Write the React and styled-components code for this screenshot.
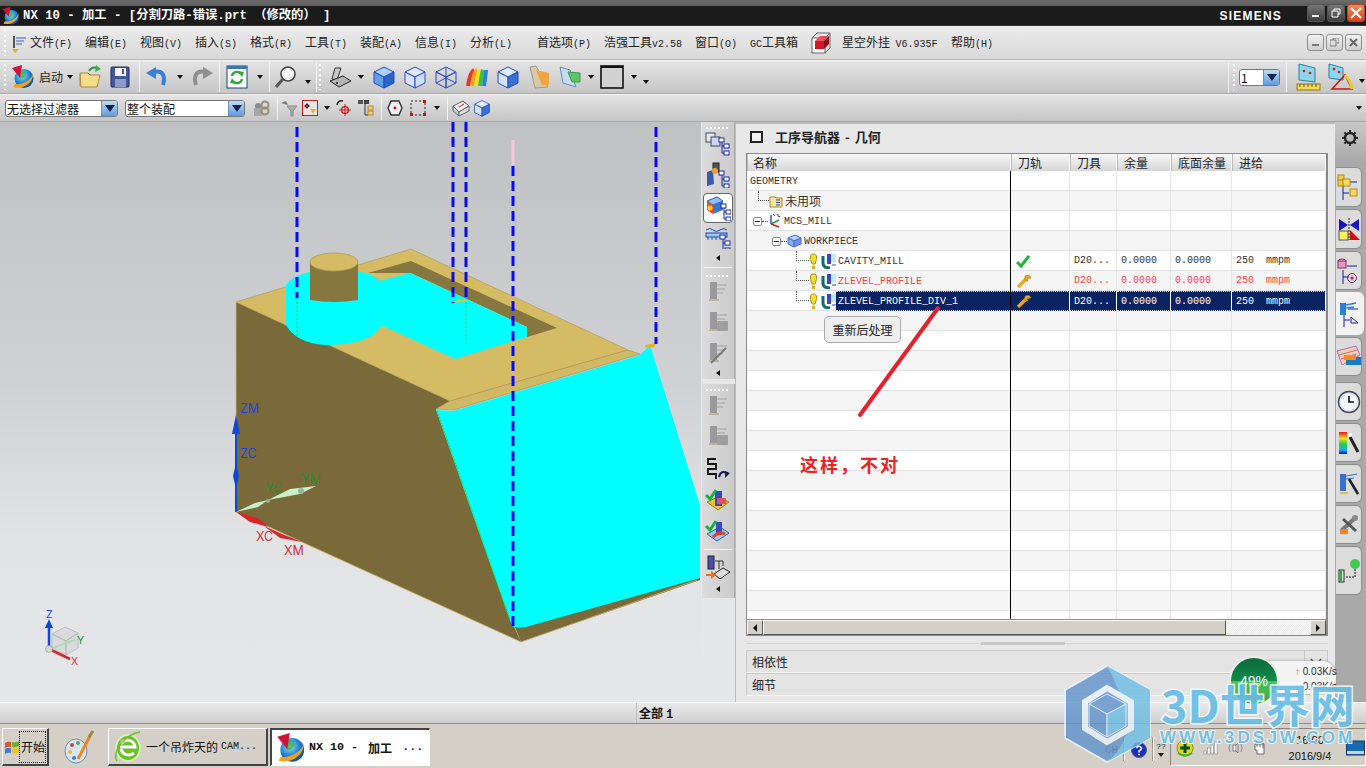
import React from "react";
import styled, { createGlobalStyle } from "styled-components";

const CJK = '"Noto Sans CJK SC", sans-serif';
const MONO = '"Liberation Mono", "Noto Sans CJK SC", monospace';

const Global = createGlobalStyle`
  html, body { margin: 0; padding: 0; background: #d4d0c8; overflow: hidden; }
  * { box-sizing: border-box; }
`;

const Screen = styled.div`
  position: relative; width: 1366px; height: 768px; overflow: hidden;
  display: flex; flex-direction: column; font: 12px/1 ${CJK}; color: #111;
`;

/* ---------- generic svg wrapper (drawings only) ---------- */
const SvgBox = styled.svg`flex: none; display: block;`;
const I = ({ w = 20, h = 20, children }) => (
  <SvgBox width={w} height={h} viewBox={`0 0 ${w} ${h}`}>{children}</SvgBox>
);

/* ---------- title bar ---------- */
const TitleBar = styled.div`
  flex: 0 0 26px; display: flex; align-items: center; padding: 6px 0 0 2px;
  background: linear-gradient(#6b6b6b 0, #5c5c5c 6px, #1b1b1b 6px, #1b1b1b 25px, #333 25px);
  color: #fff;
`;
const TitleText = styled.span`
  margin-left: 3px; font: bold 12.3px/1 ${MONO}; white-space: pre;
`;
const Brand = styled.span`
  margin-left: auto; margin-right: 25px; font: bold 12px/1 "Liberation Sans", sans-serif; letter-spacing: 1.2px;
`;
const WinBtns = styled.div`display: flex; gap: 2px; align-self: flex-start; margin-top: -2px; padding-right: 1px;`;
const WinBtn = styled.div`
  width: 18px; height: 18px; border-radius: 3px; display: flex; align-items: center; justify-content: center;
  background: ${p => p.$close ? "linear-gradient(#f08a5c,#d8431c)" : "linear-gradient(#777,#3f3f3f)"};
  border: 1px solid ${p => p.$close ? "#b5472a" : "#555"};
`;

/* ---------- menu bar ---------- */
const MenuBar = styled.div`
  flex: 0 0 34px; display: flex; align-items: center; padding-left: 3px;
  background: linear-gradient(#ececec, #d9d9d9); border-bottom: 1px solid #b5b5b5;
`;
const Grip = styled.div`
  flex: none; width: ${p => p.$w || 7}px; height: ${p => p.$h || 26}px;
  background: repeating-linear-gradient(#fff 0 2px, transparent 2px 5px) 1px 0 / 2px 100% no-repeat;
`;
const MenuItem = styled.div`
  flex: none; width: ${p => p.$w}px; margin-left: ${p => p.$ml || 0}px; font-size: 12px; white-space: pre; color: #222;
`;
const Key = styled.span`font: 10px/1 ${MONO};`;
const DocBtns = styled.div`margin-left: auto; display: flex; gap: 2px; padding-right: 4px; margin-top: -1px;`;
const DocBtn = styled.div`
  width: 17px; height: 17px; border: 1px solid #8f8f8f; border-radius: 3px; background: linear-gradient(#f2f2f2,#cfcfcf);
  display: flex; align-items: center; justify-content: center;
`;

/* ---------- tool bars ---------- */
const Toolbar = styled.div`
  flex: 0 0 ${p => p.$h}px; display: flex; align-items: center; padding-left: ${p => p.$pad}px;
  background: linear-gradient(#e4e4e4, #c6c6c6); border-top: 1px solid #f2f2f2; border-bottom: 1px solid #a6a6a6;
`;
const Tool = styled.div`
  flex: none; width: ${p => p.$w}px; display: flex; align-items: center; justify-content: center;
`;
const ToolLabel = styled.span`flex: none; width: 28px; padding-left: 4px; font-size: 12px; color: #222;`;
const Caret = styled.span`
  flex: none; display: block; width: 0; height: 0; margin-top: ${p => p.$down || 0}px;
  border-left: 3.5px solid transparent; border-right: 3.5px solid transparent; border-top: 4px solid #111;
`;
const Sep = styled.div`
  flex: none; width: ${p => p.$w || 3}px; height: ${p => p.$h || 30}px;
  background: linear-gradient(#f4f4f4,#f4f4f4) center / 1px 100% no-repeat;
`;
const Spacer = styled.div`flex: 1;`;
const RightGroup = styled.div`
  flex: none; width: 138px; height: 100%; display: flex; align-items: center; padding-left: 3px;
  border-left: 1px solid #ededed;
`;
const SelectBox = styled.div`
  flex: none; width: ${p => p.$w}px; height: 17px; display: flex; align-items: stretch;
  margin-right: ${p => p.$mr || 0}px; background: #fff; border: 1px solid #777; border-radius: 3px; overflow: hidden;
`;
const SelectText = styled.span`flex: 1; font-size: 12px; line-height: 15px; padding-left: 1px; color: #111; white-space: nowrap;`;
const SelectArrow = styled.span`
  flex: 0 0 16px; display: flex; align-items: center; justify-content: center;
  background: linear-gradient(#bfdcf6,#5d9be0); border-left: 1px solid #6d8fb8;
`;
const BigCaret = styled.span`
  display: block; width: 0; height: 0; border-left: 5.5px solid transparent; border-right: 5.5px solid transparent;
  border-top: 7px solid #10204a;
`;

/* ---------- main area ---------- */
const Main = styled.div`flex: 0 0 580px; display: flex; overflow: hidden;`;
const Viewport = styled.div`
  flex: 0 0 701px; height: 100%;
  background: linear-gradient(#bfc1c3 0, #d0d1d4 45%, #e2e3e5 72%, #e6e7e9 100%);
`;
const SideColumn = styled.div`
  flex: 0 0 34px; display: flex; flex-direction: column; gap: 5px; background: #e6e7e9;
`;
const SideGroup = styled.div`
  flex: 0 0 ${p => p.$h}px; display: flex; flex-direction: column; align-items: center;
  background: linear-gradient(90deg,#dcdcdc,#cbcbcb); border-right: 1px solid #a9a9a9; border-left: 1px solid #e8e8e8;
`;
const SideGrip = styled.div`
  flex: 0 0 6px; width: 24px; margin-top: 3px;
  background: repeating-linear-gradient(90deg,#fff 0 2px,transparent 2px 4px) center 2px / 100% 2px no-repeat;
`;
const SideBtn = styled.div`
  flex: 0 0 ${p => p.$h}px; width: 30px; display: flex; align-items: center; justify-content: center;
  ${p => p.$on && "background:#fff;border:1px solid #666;border-radius:4px;"}
`;
const SideArrow = styled.div`
  flex: 0 0 ${p => p.$h || 14}px; display: flex; align-items: center; justify-content: center;
  &::after { content: ""; border-top: 3.5px solid transparent; border-bottom: 3.5px solid transparent; border-right: 4px solid #111; }
`;
const SideRule = styled.div`flex: 0 0 1px; width: 28px; background: #f4f4f4; margin: 2px 0;`;

const NavPanel = styled.div`
  flex: 0 0 600px; display: flex; flex-direction: column; padding: 0 7px 4px 10px;
  background: #e8e8e8; border-left: 1px solid #bcbcbc; border-top: 2px solid #bdbdbd;
`;
const NavHeader = styled.div`flex: 0 0 29px; display: flex; align-items: center; padding: 0 0 4px 4px; gap: 12px;`;
const CheckBox = styled.span`flex: none; width: 13px; height: 12px; border: 2px solid #222; background: #f0f0f0;`;
const NavTitle = styled.span`font-size: 13px; font-weight: 700; white-space: pre; word-spacing: 2px; color: #222;`;
const TableBox = styled.div`
  flex: 0 0 483px; width: 582px; border: 1px solid #8a8a8a; border-right-width: 2px; background: #fff; display: flex; flex-direction: column; overflow: hidden;
`;
const COLS = "264px 59px 47px 54px 61px 1fr";
const HeadRow = styled.div`
  flex: 0 0 17px; display: grid; grid-template-columns: ${COLS};
  background: linear-gradient(#f8f8f8,#d6d6d6);
`;
const HeadCell = styled.div`
  font-size: 12px; line-height: 17px; padding-left: ${p => p.$pad || 6}px; color: #222; border-right: 1px solid #fff; border-left: 1px solid #bbb; white-space: nowrap;
`;
const Body = styled.div`flex: 1; overflow: hidden;`;
const Row = styled.div`
  height: 20px; display: grid; grid-template-columns: ${COLS};
  background: ${p => p.$alt ? "#f5f5f5" : "#fff"};
  border-bottom: 1px solid #e2e2e2;
  color: ${p => p.$red ? "#f4424a" : "#333"};
`;
const NameCell = styled.div`
  display: flex; align-items: center; height: 20px; padding-left: ${p => p.$pad || 0}px; border-right: 1px solid #000; min-width: 0;
`;
const Cell = styled.div`
  font: 10px/18px ${MONO}; white-space: pre; padding: 1px 0 0 ${p => p.$pad ?? 4}px; height: ${p => p.$sel ? 20 : 19}px;
  display: flex; align-items: center; border-right: ${p => p.$sel ? "1px solid #fff" : "1px solid #e6e6e6"};
  ${p => p.$sel && `background:#0a2463;color:#fff;border-top:1px dotted #ccc;border-bottom:1px dotted #ccc;`}
`;
const Elbow = styled.span`
  flex: none; align-self: flex-start; width: ${p => p.$w}px; height: 10px; margin-left: ${p => p.$ml || 0}px;
  border-left: 1px dotted #555; border-bottom: 1px dotted #555;
`;
const Dash = styled.span`
  flex: none; width: ${p => p.$w}px; height: 0; border-bottom: 1px dotted #555;
`;
const Toggle = styled.span`
  flex: none; width: 9px; height: 9px; margin-left: ${p => p.$ml || 0}px; border: 1px solid #888; border-radius: 2px;
  background: linear-gradient(#222,#222) center / 5px 1px no-repeat, #fff;
`;
const NodeText = styled.span`
  margin-left: ${p => p.$ml || 0}px; padding-top: 1px; font: 10px/1 ${MONO}; white-space: pre;
`;
const NodeCn = styled.span`margin-left: 2px; margin-top: -1px; font-size: 12px; color: #333;`;
const BulbGap = styled.span`flex: none; width: 3px;`;
const SelText = styled.span`
  flex: 1; align-self: stretch; margin-left: 0; padding: 1px 0 0 2px; display: flex; align-items: center;
  font: 10px/1 ${MONO}; color: #fff; background: #0a2463; border-top: 1px dotted #ccc; border-bottom: 1px dotted #ccc;
`;
const ScrollBar = styled.div`
  flex: 0 0 16px; display: flex; background: repeating-conic-gradient(#e8e8e8 0 25%, #fff 0 50%) 0 0 / 2px 2px; border-top: 1px solid #8a8a8a;
`;
const ScrollBtn = styled.div`
  flex: 0 0 ${p => p.$w}px; background: #d4d0c8; border: 1px solid; border-color: #fff #555 #555 #fff;
  display: flex; align-items: center; justify-content: center;
  &::after { content: ""; border-top: 4px solid transparent; border-bottom: 4px solid transparent; ${p => p.$right ? "border-left: 4px solid #111;" : p.$left ? "border-right: 4px solid #111;" : ""} }
`;
const ScrollGap = styled.div`flex: 1;`;
const Sash = styled.div`
  flex: 0 0 14px; background: linear-gradient(#c8c8c8,#c8c8c8) 235px 6px / 84px 3px no-repeat, linear-gradient(#d4d4d4,#d4d4d4) 0 7px / 100% 1px no-repeat;
`;
const Fold = styled.div`
  flex: 0 0 23px; width: 582px; display: flex; align-items: center; justify-content: space-between; padding-left: 5px; font-size: 12px; color: #222;
  background: #e4e4e4; border: 1px solid #c8c8c8; border-bottom-color: #f4f4f4;
`;
const FoldChevron = styled.span`
  flex: none; width: 23px; height: 100%; display: flex; align-items: center; justify-content: center; border-left: 1px solid #c8c8c8;
`;
const RightRail = styled.div`
  flex: 0 0 31px; display: flex; flex-direction: column; align-items: flex-start;
  background: linear-gradient(#c8c8c8 0, #a9a9a9 40px, #a9a9a9 100%);
`;
const GearSlot = styled.div`flex: 0 0 45px; width: 31px; display: flex; align-items: center; justify-content: center; padding-right: 1px; padding-bottom: 14px;`;
const RailTab = styled.div`
  flex: 0 0 ${p => p.$h}px; width: ${p => p.$on ? 28 : 26}px; margin: 0 0 2px 1px; margin-top: ${p => p.$mt || 0}px;
  display: flex; align-items: center; justify-content: center; border-radius: 0 6px 6px 0;
  background: ${p => p.$on ? "#f2f2f2" : "#dcdcdc"}; border: 1px solid ${p => p.$on ? "#f2f2f2" : "#8d8d8d"}; border-left: none;
`;

/* ---------- status + taskbar ---------- */
const StatusBar = styled.div`
  flex: 0 0 22px; display: flex; align-items: stretch; padding-left: 636px;
  background: linear-gradient(#eaeaea,#cfcfcf); border-top: 1px solid #f8f8f8; border-bottom: 1px solid #8c8c8c;
`;
const StatusCell = styled.div`
  border-left: 1px solid #bdbdbd; padding-left: 2px; font: 700 12px/20px ${CJK}; white-space: pre; color: #111;
`;
const StatusNum = styled.span`font: 700 12px/1 ${MONO}; margin-left: 3px;`;
const Taskbar = styled.div`
  flex: 0 0 44px; display: flex; align-items: flex-start; padding: 4px 0 0 2px; background: #d4d0c8; position: relative;
`;
const StartBtn = styled.div`
  flex: 0 0 47px; height: 38px; display: flex; align-items: center; padding-left: 1px; background: #d4d0c8;
  border: 1px solid; border-color: #fff #444 #444 #fff; border-width: 1px 2px 2px 1px;
`;
const FocusText = styled.span`
  flex: none; height: 32px; display: flex; align-items: center; padding: 0 0 0 1px; margin-left: -1px; font-size: 12px; white-space: nowrap; border: 1px dotted #111; color: #111;
`;
const QuickSlot = styled.div`flex: 0 0 59px; height: 38px; display: flex; align-items: center; justify-content: center;`;
const TaskBtn = styled.div`
  flex: 0 0 ${p => p.$w}px; height: 38px; display: flex; align-items: center; gap: 3px; padding-left: 4px; margin-right: 2px;
  font-size: 12px; white-space: pre; color: #111;
  background: ${p => p.$on ? "#fff" : "#d4d0c8"}; border: 1px solid; border-width: ${p => p.$on ? "2px 1px 1px 2px" : "1px 2px 2px 1px"};
  border-color: ${p => p.$on ? "#444 #fff #fff #444" : "#fff #444 #444 #fff"};
  ${p => p.$on && `font-weight: 700;`}
`;
const TaskLatin = styled.span`font: ${p => p.$b ? "700 11.7px" : "10px"}/1 ${MONO}; white-space: pre;`;
const Lang = styled.div`
  margin-left: auto; flex: 0 0 18px; height: 38px; display: flex; align-items: center; font: 11px/1 ${MONO}; color: #555; margin-top: 3px;
`;
const TraySep = styled.div`flex: 0 0 1px; height: 24px; margin: 9px ${p => p.$mr}px 0 0; background: #9a968e; box-shadow: 1px 0 #fff;`;
const HelpSlot = styled.div`flex: 0 0 16px; height: 38px; display: flex; align-items: center; margin-top: 3px; margin-right: 5px;`;
const Chevrons = styled.div`
  flex: 0 0 12px; height: 38px; display: flex; flex-direction: column; align-items: center; justify-content: center; gap: 2px; margin-top: 3px; margin-right: 3px;
  font: 8px/1 ${MONO}; color: #333;
`;
const Tray = styled.div`
  flex: 0 0 184px; height: 38px; display: flex; align-items: center; gap: 9px; padding: 2px 0 0 5px;
  border: 1px solid; border-color: #8a867e #fff #fff #8a867e;
`;
const Clock = styled.div`
  flex: none; margin-left: 7px; display: flex; flex-direction: column; align-items: center; gap: 5px; font: 11px/1 "Liberation Sans", sans-serif; color: #111; width: 54px;
`;

/* ---------- overlays ---------- */
const Bubble = styled.div`
  position: absolute; left: 824px; top: 316px; width: 77px; height: 27px; display: flex; align-items: center; justify-content: center;
  font-size: 12px; color: #222; background: #efefef; border: 1px solid #aaa; border-radius: 5px;
`;
const Stroke = styled.svg`position: absolute; left: 850px; top: 300px;`;
const Note = styled.div`
  position: absolute; left: 800px; top: 453px; color: #ee2222; font: 700 18px/22px ${CJK}; letter-spacing: 2px; white-space: pre;
`;
const Meter = styled.div`
  position: absolute; left: 1262px; top: 661px; width: 74px; height: 33px; padding: 3px 0 0 33px; border-radius: 0 14px 14px 0; background: #f4f4f4;
  font: 10px/15px "Liberation Sans", sans-serif; color: #333; box-shadow: 0 0 3px #999;
`;
const MeterLine = styled.div`white-space: pre;`;
const Dial = styled.div`
  position: absolute; left: 1229px; top: 656px; width: 50px; height: 50px; border-radius: 50%; border: 2px solid #e8efe8;
  background: linear-gradient(#0c6a3a 0, #128a4a 50%, #4cc25a 50%, #38a848 100%); color: #fff;
  display: flex; align-items: center; justify-content: center; font: 14px/1 "Liberation Sans", sans-serif;
`;
const MarkLogo = styled.svg`position: absolute; left: 1063px; top: 664px; opacity: .8;`;
const MarkTitle = styled.div`
  position: absolute; left: 1161px; top: 676px; font: 700 45px/56px ${CJK}; white-space: pre; color: #67bde6; opacity: .9;
  -webkit-text-stroke: 3px #f4fbff; paint-order: stroke fill;
`;
const MarkSub = styled.div`
  position: absolute; left: 1160px; top: 729px; font: 700 17px/18px "Liberation Sans", sans-serif; white-space: pre; color: #67bde6; letter-spacing: 3.2px; opacity: .88;
  -webkit-text-stroke: 2px #f4fbff; paint-order: stroke fill;
`;
const Alert = styled.span`color: ${p => p.$c};`;

/* ---------- icons ---------- */
const NxLogo = ({ s = 24, id = "a" }) => (
  <SvgBox width={s} height={s} viewBox="0 0 24 24">
    <defs><radialGradient id={`nx${id}`} cx=".4" cy=".35" r=".8"><stop offset="0" stopColor="#9fe0f0" /><stop offset=".5" stopColor="#1b84d6" /><stop offset="1" stopColor="#0a2f8a" /></radialGradient></defs>
    <circle cx="13" cy="13.5" r="9.5" fill={`url(#nx${id})`} />
    <path d="M7 6 Q13 3 15 9 Q14 13 9 14Z" fill="#3fb44a" opacity=".8" />
    <path d="M2 22 C11 25 23 18 22 8 C21 15 11 20 4 19Z" fill="#f0a020" />
    <polygon points="1,3 11,0 9,13" fill="#d2123c" />
  </SvgBox>
);
const Folder = () => (
  <I w={24} h={24}><path d="M2 8h8l2 2h10l-3 12H3z" fill="#f6dc8a" stroke="#a98a34" /><path d="M2 9v12" stroke="#a98a34" /><path d="M11 6 Q14 1 19 3" fill="none" stroke="#2f9a3a" strokeWidth="2" /><polygon points="18,0 23,4 17,7" fill="#3fae46" /></I>
);
const Floppy = () => (
  <I w={20} h={22}><rect x="1" y="1" width="18" height="20" rx="1" fill="#41579a" stroke="#1e2c5c" /><rect x="5" y="2" width="11" height="8" fill="#f4f4fa" /><rect x="12" y="3" width="2" height="5" fill="#41579a" /><rect x="5" y="13" width="11" height="8" fill="#8d9bc6" /></I>
);
const Undo = ({ c = "#3a7fd6", flip }) => (
  <I w={24} h={22}><g transform={flip ? "translate(24 0) scale(-1 1)" : undefined}><path d="M9 6 C17 4 21 9 18 19" fill="none" stroke={c} strokeWidth="4" /><polygon points="1,7 11,1 11,13" fill={c} /></g></I>
);
const Refresh = () => (
  <I w={22} h={24}><rect x="1" y="1" width="20" height="22" fill="#fff" stroke="#13447c" /><rect x="1" y="1" width="20" height="3" fill="#3a76b8" /><path d="M15 9 A5 5 0 0 0 6 11" fill="none" stroke="#2faa3a" strokeWidth="2.4" /><path d="M7 16 A5 5 0 0 0 16 14" fill="none" stroke="#2faa3a" strokeWidth="2.4" /><polygon points="12,6 18,7 16,12" fill="#2faa3a" /><polygon points="10,19 4,18 6,13" fill="#2faa3a" /></I>
);
const Magnifier = () => (
  <I w={24} h={24}><circle cx="14" cy="9" r="7" fill="#f6f6f6" stroke="#444" strokeWidth="1.6" /><path d="M9 14 L2 22" stroke="#555" strokeWidth="3" /></I>
);
const Iso = () => (
  <I w={24} h={22}><path d="M7 2 L13 2 L9 14 L4 13z" fill="#c8c8c8" stroke="#333" /><polygon points="2,15 15,10 23,15 11,21" fill="#b5b5b5" stroke="#222" /><circle cx="9" cy="17" r="1" fill="#222" /></I>
);
const Cube = ({ mode = "solid", s = 24 }) => {
  const st = "#2a48c4";
  const f = mode === "solid" ? ["#a5d2f5", "#5f9fe6", "#2a64c6"] : mode === "half" ? ["#dfeeff", "#cfe3fb", "#3a70d0"] : mode === "line" ? ["#dbe9f8", "#d6e4f4", "#cddff2"] : ["none", "none", "none"];
  return (
    <SvgBox width={s} height={s} viewBox="0 0 24 24">
      <polygon points="12,2 22,7 12,12 2,7" fill={f[0]} stroke={st} />
      <polygon points="2,7 12,12 12,23 2,18" fill={f[1]} stroke={st} />
      <polygon points="22,7 12,12 12,23 22,18" fill={f[2]} stroke={st} />
      {mode === "wire" && <path d="M2 18 L12 13 L22 18 M12 2 V13" fill="none" stroke={st} />}
    </SvgBox>
  );
};
const Rainbow = () => (
  <I w={24} h={22}>{["#e8342a", "#f2a01c", "#f4e01c", "#3cc040", "#2a80e0"].map((c, i) => <path key={c} d={`M${3 + i * 4} 20 Q${5 + i * 4} 6 ${9 + i * 3} 4`} stroke={c} strokeWidth="4" fill="none" />)}</I>
);
const Sheet = () => (
  <I w={24} h={24}><polygon points="3,2 9,1 21,22 8,23" fill="#d9c9a8" stroke="#999" /><polygon points="9,5 22,8 22,20 15,20" fill="#f0a640" /></I>
);
const Planes = () => (
  <I w={24} h={24}><polygon points="2,2 12,5 18,22 5,18" fill="#c6dcf0" stroke="#6a8cb0" /><polygon points="10,7 22,8 22,17 14,17" fill="#5ec46a" stroke="#3a9a4a" /></I>
);
const BlackBox = () => <I w={24} h={24}><rect x="1" y="1" width="22" height="22" fill="#d2d2d2" stroke="#111" strokeWidth="1.6" /><rect x="1" y="1" width="22" height="2" fill="#111" /></I>;
const RedCube = () => (
  <I w={20} h={22}><rect x="1" y="6" width="13" height="15" fill="#fff" stroke="#666" /><polygon points="4,9 13,9 13,17 4,17" fill="#d01828" /><polygon points="4,9 9,4 18,4 13,9" fill="#f04c5c" /><polygon points="13,9 18,4 18,12 13,17" fill="#8a0c18" /><path d="M1 6 L6 1 H19 V16 L14 21 M14 6 L19 1" fill="none" stroke="#666" /></I>
);
const Ruler = () => (
  <I w={26} h={28}><polygon points="3,1 19,5 19,19 3,17" fill="#8fd4ea" stroke="#2a80a8" /><circle cx="8" cy="8" r="1.3" fill="#e01020" /><circle cx="14" cy="10" r="1.3" fill="#e01020" /><rect x="1" y="21" width="23" height="6" fill="#f2dc4c" stroke="#8a7a10" /><path d="M4 21v3M8 21v3M12 21v3M16 21v3M20 21v3" stroke="#554" /></I>
);
const Protractor = () => (
  <I w={26} h={28}><polygon points="1,1 15,5 15,17 1,15" fill="#8fd4ea" stroke="#2a80a8" /><circle cx="6" cy="6" r="1.3" fill="#e01020" /><circle cx="11" cy="9" r="1.3" fill="#e01020" /><path d="M4 26 L17 12 L24 26Z" fill="none" stroke="#c81818" strokeWidth="1.6" /><path d="M17 12 Q23 18 24 26" fill="none" stroke="#e8cc2c" strokeWidth="3" /></I>
);
const GrayTool = () => (
  <I w={20} h={20}><circle cx="7" cy="8" r="3" fill="#8a8a8a" /><rect x="3" y="10" width="8" height="8" fill="#a6a6a6" /><circle cx="14" cy="7" r="3.5" fill="none" stroke="#9a8e70" strokeWidth="2" /><circle cx="14" cy="13" r="3.5" fill="none" stroke="#9a8e70" strokeWidth="2" /></I>
);
const Funnel = () => <I w={18} h={18}><path d="M1 4 L6 2 L8 6Z" fill="#7a7a7a" /><polygon points="7,7 17,7 13,12 13,17 11,17 11,12" fill="#b8b0a0" stroke="#888" /></I>;
const RedBoxIco = () => (
  <I w={16} h={16}><rect x=".5" y=".5" width="15" height="15" fill="#e6e6e6" stroke="#c02020" /><path d="M5 3V9M2 6H8" stroke="#c01818" /><circle cx="5" cy="6" r="1.6" fill="none" stroke="#111" /><polygon points="8,9 14,9 11,14" fill="#f0b020" /></I>
);
const TargetIco = () => <I w={18} h={18}><path d="M2 6 Q3 1 8 2" stroke="#222" strokeWidth="1.5" fill="none" /><circle cx="10" cy="11" r="3.4" fill="none" stroke="#d01818" strokeWidth="1.4" /><path d="M10 5V17M4 11H16" stroke="#d01818" /></I>;
const BinoIco = () => <I w={18} h={18}><rect x="1" y="1" width="5" height="4" fill="#555" /><rect x="7" y="1" width="5" height="4" fill="#444" /><rect x="11" y="7" width="5" height="4" fill="#f0cf80" stroke="#b08a30" /><rect x="11" y="12" width="5" height="4" fill="#f0cf80" stroke="#b08a30" /><path d="M8 5 V16 H11" stroke="#333" fill="none" /></I>;
const HexIco = () => <I w={16} h={16}><polygon points="4,1 12,1 15,8 12,15 4,15 1,8" fill="#f0f0f0" stroke="#333" strokeWidth="1.4" /><circle cx="8" cy="8" r="1.4" fill="#d01010" /></I>;
const DashBox = () => <I w={18} h={18}><rect x="2" y="2" width="14" height="14" fill="none" stroke="#222" strokeDasharray="2 2" /><rect x="1" y="14" width="3" height="3" fill="#d01010" /><rect x="14" y="14" width="3" height="3" fill="#d01010" /><rect x="14" y="1" width="3" height="3" fill="#d01010" /></I>;
const TinyBox = () => <I w={18} h={18}><polygon points="1,7 11,2 17,7 7,13" fill="#eee" stroke="#666" /><polygon points="1,7 7,13 7,17 1,12" fill="#ccc" stroke="#666" /><polygon points="7,13 17,7 17,12 7,17" fill="#ddd" stroke="#666" /><path d="M7 8 L12 5" stroke="#d01010" /></I>;

const TreeMark = ({ x = 16, y = 6 }) => (
  <g fill="#fff" stroke="#1a2aa0">
    <path d={`M${x + 3} ${y}V${y + 12}H${x + 5}M${x + 3} ${y + 5}H${x + 5}`} fill="none" />
    <rect x={x} y={y - 3} width="5" height="4" /><rect x={x + 5} y={y + 3} width="5" height="4" /><rect x={x + 5} y={y + 10} width="5" height="4" />
  </g>
);
const TreeProgram = () => <I w={26} h={24}><rect x="1" y="1" width="9" height="9" fill="#e8e8f4" stroke="#445" /><rect x="6" y="5" width="9" height="9" fill="#cfd4f0" stroke="#445" /><TreeMark x={14} y={9} /></I>;
const TreeTool = () => <I w={26} h={26}><polygon points="2,10 8,8 9,22 2,24" fill="#3a58b0" /><rect x="8" y="1" width="6" height="9" fill="#555" stroke="#222" /><circle cx="10" cy="9" r="3" fill="#f0a020" /><TreeMark x={14} y={12} /></I>;
const TreeGeom = () => <I w={26} h={26}><polygon points="2,6 12,2 18,6 8,10" fill="#8fc0f0" stroke="#2a5cc0" /><polygon points="2,6 8,10 8,19 2,15" fill="#f04c20" /><polygon points="8,10 18,6 18,15 8,19" fill="#3a76d0" /><circle cx="5" cy="13" r="2.5" fill="#f8d020" /><TreeMark x={16} y={12} /></I>;
const TreeMethod = () => <I w={28} h={24}><path d="M2 5 Q6 2 9 5 T16 5 T23 5" fill="none" stroke="#1a4ab0" /><rect x="2" y="8" width="21" height="4" fill="#9cc8f0" stroke="#1a4ab0" /><path d="M4 12v3M8 12v3M12 12v3" stroke="#1a4ab0" /><TreeMark x={16} y={13} /></I>;
const GrayOp = ({ v }) => (
  <I w={24} h={24}><g opacity=".55"><rect x="4" y="2" width="7" height="17" fill="#6a6a70" /><path d="M11 5h10M11 9h8M11 13h6" stroke="#777" /><path d="M3 20h10" stroke="#a89a70" strokeWidth="2" />{v === 1 && <rect x="11" y="11" width="11" height="10" rx="1" fill="#777" />}{v === 2 && <path d="M5 22L20 7" stroke="#333" strokeWidth="2" />}</g></I>
);
const PathIco = () => <I w={24} h={24}><path d="M10 2H2V7H10V12H2V17H10V22" fill="none" stroke="#111" strokeWidth="1.8" /><path d="M13 20 Q15 12 22 17" fill="none" stroke="#1a1a50" strokeWidth="2" /><polygon points="19,21 24,16 19,14" fill="#1a1a50" /></I>;
const VerifyA = () => <I w={26} h={24}><polygon points="2,14 13,9 24,14 13,22" fill="#f0c030" stroke="#a08010" /><rect x="10" y="3" width="7" height="15" fill="#3a48c0" /><rect x="12" y="10" width="9" height="6" fill="#e05060" /><path d="M1 7L5 11L11 2" fill="none" stroke="#14b43a" strokeWidth="3" /></I>;
const VerifyB = () => <I w={26} h={24}><polygon points="2,15 15,8 24,14 12,22" fill="#9cc8f0" stroke="#2a60a0" /><rect x="11" y="3" width="6" height="13" fill="#3a48c0" /><path d="M8 18 Q14 12 20 15" stroke="#e0402a" strokeWidth="3" fill="none" /><path d="M1 7L5 11L11 2" fill="none" stroke="#14b43a" strokeWidth="3" /></I>;
const PostIco = () => <I w={26} h={26}><rect x="3" y="2" width="6" height="13" fill="#4a50b0" stroke="#222" /><path d="M10 7h8v5M14 7v8" stroke="#333" fill="none" /><polygon points="9,20 18,14 25,18 15,25" fill="#ddd" stroke="#222" /><path d="M1 21h6" stroke="#f06a20" strokeWidth="2" /><polygon points="6,17 11,21 6,25" fill="#f06a20" /></I>;

const Gear = () => <I w={18} h={18}><circle cx="9" cy="9" r="5" fill="none" stroke="#222" strokeWidth="2.4" /><path d="M9 1v3M9 14v3M1 9h3M14 9h3M3.4 3.4l2 2M12.6 12.6l2 2M3.4 14.6l2-2M12.6 5.4l2-2" stroke="#222" strokeWidth="2" /></I>;
const RailTree = ({ children }) => <I w={24} h={26}><path d="M6 12V26M6 19H12M10 8h10" stroke="#1a1aa0" fill="none" />{children}</I>;
const RailA = () => <RailTree><rect x="1" y="1" width="6" height="6" fill="#f4cc40" stroke="#b08a10" /><rect x="1" y="6" width="6" height="6" fill="#f4cc40" stroke="#b08a10" /><rect x="6" y="5" width="7" height="7" fill="#f8d860" stroke="#b08a10" /><rect x="13" y="15" width="7" height="7" fill="#f8d860" stroke="#b08a10" /></RailTree>;
const RailB = () => <I w={24} h={24}><polygon points="2,2 11,8 2,14" fill="#1414c0" /><polygon points="22,2 13,8 22,14" fill="#1414c0" /><rect x="2" y="14" width="9" height="9" fill="#f8f060" stroke="#555" /><polygon points="13,23 23,23 13,13" fill="#d01010" /><path d="M12 1V23" stroke="#222" strokeDasharray="2 1" /></I>;
const RailC = () => <RailTree><ellipse cx="5" cy="3" rx="4" ry="2" fill="#e8b8d0" stroke="#902060" /><rect x="1" y="3" width="8" height="7" fill="#d8a0c0" stroke="#902060" /><circle cx="15" cy="20" r="4.5" fill="none" stroke="#902060" /><circle cx="15" cy="20" r="1.5" fill="#902060" /></RailTree>;
const RailD = () => <RailTree><rect x="2" y="2" width="6" height="12" fill="#2a80d8" /><path d="M8 4l10-2M8 7l8-1" stroke="#2a80d8" strokeWidth="1.4" /><polygon points="13,16 20,22 13,22" fill="#e8f0fa" stroke="#1a1aa0" /></RailTree>;
const RailE = () => <I w={26} h={24}><polygon points="1,6 20,1 24,10 6,20" fill="#f4d0a0" stroke="#b06ad0" /><path d="M3 10l18-5M5 14l15-5" stroke="#b06ad0" /><rect x="10" y="12" width="15" height="8" fill="#1878c8" /><rect x="8" y="10" width="12" height="5" fill="#f09020" /></I>;
const RailClock = () => <I w={24} h={24}><circle cx="12" cy="12" r="10.5" fill="#dbe6f4" stroke="#445" strokeWidth="1.4" /><circle cx="12" cy="12" r="8" fill="#f4f8fc" /><path d="M12 6V12H17" stroke="#111" strokeWidth="1.6" fill="none" /></I>;
const RailSpectrum = () => (
  <I w={24} h={26}><defs><linearGradient id="sp" x2="0" y2="1"><stop offset="0" stopColor="#e81818" /><stop offset=".3" stopColor="#f0e020" /><stop offset=".55" stopColor="#20d040" /><stop offset=".8" stopColor="#20b0f0" /><stop offset="1" stopColor="#1010d0" /></linearGradient></defs><rect x="2" y="2" width="8" height="22" fill="url(#sp)" /><path d="M13 7L21 22" stroke="#222" strokeWidth="3" /><circle cx="13" cy="5" r="2" fill="#fff" /></I>
);
const RailMill = () => <I w={24} h={24}><rect x="3" y="2" width="6" height="17" fill="#3a70d0" /><path d="M9 4l11-2M9 7l8-1" stroke="#3a70d0" /><path d="M3 21h8" stroke="#e0c040" strokeWidth="2" /><path d="M12 7L21 22" stroke="#222" strokeWidth="2.6" /></I>;
const RailWrench = () => <I w={24} h={24}><path d="M4 18L17 6" stroke="#777" strokeWidth="4" /><circle cx="18" cy="5" r="3" fill="#888" /><path d="M6 6L19 18" stroke="#555" strokeWidth="3" /><rect x="3" y="16" width="8" height="5" fill="#f08020" /></I>;
const RailNode = () => <I w={24} h={26}><rect x="2" y="12" width="5" height="12" fill="#dff4e0" stroke="#222" /><path d="M4 12V24" stroke="#20b040" strokeWidth="2" /><circle cx="18" cy="6" r="5" fill="#40c850" /><path d="M18 11V19H9" stroke="#111" strokeDasharray="2 1" fill="none" /></I>;

const Bulb = () => <I w={9} h={17}><path d="M4.5 1 C8 1 8 4 7 8 L6 11 H3 L2 8 C1 4 1 1 4.5 1Z" fill="#f4e030" stroke="#b09010" /><rect x="3" y="13" width="3" height="3" fill="#d8b010" /></I>;
const OpIco = () => <I w={15} h={16}><path d="M2 3 V10 Q2 15 9 15" fill="none" stroke="#176a6a" strokeWidth="3" /><rect x="6" y="1" width="4" height="10" fill="#3a48c0" /><rect x="10" y="1" width="5" height="8" fill="#bfe8f8" /><path d="M11 12h4" stroke="#2a50e0" /></I>;
const Check = () => <I w={14} h={13}><path d="M1 7L5 11L13 1" fill="none" stroke="#1fb43a" strokeWidth="3" /></I>;
const Wrench = () => <I w={16} h={15}><path d="M2 13L10 5" stroke="#e8a820" strokeWidth="3.4" /><path d="M9 2 Q14 0 15 4 L11 5 L12 7 Q8 8 9 2Z" fill="#e8a820" stroke="#8a6a10" strokeWidth=".5" /></I>;
const UnusedIco = () => <I w={14} h={13}><path d="M1 2h5l1 1h6v9H1z" fill="#f8e59c" stroke="#a88a34" /><path d="M7 5h4M7 7.500h4M7 10h4" stroke="#3046b0" /></I>;
const McsIco = () => <I w={16} h={16}><path d="M3 11V2" fill="none" stroke="#1a3ad0" strokeWidth="1.3" /><path d="M3 11L11 7" stroke="#18a040" strokeWidth="1.4" /><path d="M3 11L11 14" stroke="#d01818" strokeWidth="1.4" /><path d="M5 1l2 2M9 1l2 3M12 3l-1 1" stroke="#333" /></I>;
const WpIco = () => <I w={15} h={14}><polygon points="1,4 8,1 14,4 7,7" fill="#b4d0f8" stroke="#4a70d0" /><polygon points="1,4 7,7 7,13 1,10" fill="#86aef0" stroke="#4a70d0" /><polygon points="7,7 14,4 14,10 7,13" fill="#6a92e0" stroke="#4a70d0" /></I>;
const Flag = () => <I w={16} h={16}><path d="M1 4 Q4 2 7 3 V8 Q4 7 1 9Z" fill="#e0502a" /><path d="M8 3 Q11 4 15 2 V7 Q11 9 8 8Z" fill="#6cb030" /><path d="M1 10 Q4 8 7 9 V14 Q4 13 1 15Z" fill="#3a80d8" /><path d="M8 9 Q11 10 15 8 V13 Q11 15 8 14Z" fill="#f0c020" /></I>;
const Palette = () => <I w={32} h={36}><ellipse cx="13" cy="22" rx="11" ry="12" fill="#d8e6f4" stroke="#7a8aa0" /><circle cx="9" cy="16" r="2" fill="#d84040" /><circle cx="15" cy="14" r="2" fill="#50b050" /><circle cx="7" cy="23" r="2" fill="#f0c020" /><circle cx="11" cy="29" r="2" fill="#4080d0" /><path d="M15 30L27 7" stroke="#e88820" strokeWidth="3" /><path d="M26 8L30 2" stroke="#a8803a" strokeWidth="3" /></I>;
const IeIco = () => <I w={30} h={32}><ellipse cx="15" cy="17" rx="12" ry="13" fill="#6abf2a" stroke="#d8f0c0" strokeWidth="2" /><path d="M7 16H22 A7.500 7.500 0 0 0 8 13" fill="none" stroke="#fff" strokeWidth="3" /><path d="M8 18 A8 8 0 0 0 21 22" fill="none" stroke="#fff" strokeWidth="3" /><path d="M4 30 Q0 24 8 12 Q18 2 27 1" fill="none" stroke="#6abf2a" strokeWidth="1.5" /></I>;
const HelpIco = () => <I w={16} h={16}><circle cx="8" cy="8" r="7.5" fill="#1a2ec0" stroke="#556" /><path d="M5.500 6 Q8 2.500 10.500 6 Q10.500 8 8 9V10.500" fill="none" stroke="#fff" strokeWidth="1.6" /><circle cx="8" cy="12.500" r="1" fill="#fff" /></I>;
const PlusIco = () => <I w={18} h={18}><circle cx="9" cy="9" r="8" fill="#e0d820" stroke="#7a9a10" /><path d="M4 9H14M9 4V14" stroke="#104a10" strokeWidth="3" /><path d="M2 14 Q9 19 16 14" fill="none" stroke="#3ab030" strokeWidth="2" /></I>;
const Bars = () => <I w={16} h={14}>{[0, 1, 2, 3].map(i => <rect key={i} x={1 + i * 3.5} y={10 - i * 3} width="2.6" height={3 + i * 3} fill="#fff" stroke="#888" strokeWidth=".6" />)}</I>;
const Speaker = () => <I w={15} h={14}><path d="M5 4h3v6H5zM8 4l2-2v10l-2-2" fill="#fff" stroke="#777" /><path d="M2 3Q0 7 2 11M13 3Q15 7 13 11" stroke="#888" fill="none" /></I>;
const Hand = () => <I w={15} h={14}><path d="M3 3h9v10H5V9H3z" fill="#fff" stroke="#666" /><path d="M5 1v5M8 1v5M11 2v5" stroke="#666" /></I>;
const DeskIco = () => <I w={19} h={16}><rect x=".5" y="1" width="18" height="14" fill="#1a6ab0" stroke="#0a3a70" /><rect x="1" y="11" width="17" height="3" fill="#d4d0c8" /></I>;
const FoldV = () => <I w={12} h={8}><path d="M1 1L6 7L11 1" fill="none" stroke="#444" strokeWidth="1.6" /></I>;

const Model = () => (
  <SvgBox width={701} height={580} viewBox="0 122 701 580">
    <polygon points="236,302 450,401 436,409 512,622 521,642 236,512" fill="#7a6a39" />
    <polygon points="512,620 700,570 700,580 521,642" fill="#7a6a39" />
    <path d="M236 302V512L521 642L697 580" fill="none" stroke="#c9b76c" strokeWidth=".8" />
    <polygon points="236,302 411,249 628,350 450,401" fill="#d4bb64" stroke="#b09d55" strokeWidth=".7" />
    <polygon points="450,401 628,350 640,354 454,410 436,409" fill="#d0b864" stroke="#a89550" strokeWidth=".6" />
    <polygon points="368,273 411,261 557,328 527,337 527,327 411,273" fill="#867640" />
    <polygon points="379,281 410,273 527,327 527,337 455,359 381,325" fill="#00ffff" />
    <path d="M286 285 Q296 270 335 270 Q372 270 379 281 L382 325 Q372 345 325 345 Q296 343 286 325Z" fill="#00ffff" />
    <path d="M310 262V300 Q334 304 358 300V262Z" fill="#86773f" />
    <ellipse cx="334" cy="262" rx="24" ry="9" fill="#d4bb64" stroke="#b09d55" strokeWidth=".8" />
    <path d="M436 410 L453 411 L640 355 L650 345 L700 505 V578 L533 625 Q520 630 512 626Z" fill="#00ffff" />
    <polygon points="645,345 656,343 654,347 646,348" fill="#f0b010" />
    <path d="M437 411 L510 620" stroke="#2fd03a" strokeWidth="1.2" strokeDasharray="2 1" fill="none" />
    <path d="M297 298V336M466 302V345" stroke="#22c84a" strokeWidth="1" strokeDasharray="2 2" />
    <path d="M454 302 L466 300" stroke="#f0c020" strokeWidth="2" />
    <g stroke="#0a0af0" strokeWidth="3" strokeDasharray="10 5">
      <path d="M297 127V298" /><path d="M453 122V303" /><path d="M466 122V298" /><path d="M513 166V626" /><path d="M656 127V344" />
    </g>
    <path d="M513 140V165" stroke="#f7c8dc" strokeWidth="3" />
    <g fill="#0f48d8"><path d="M235 512V432h2V512Z" /><polygon points="236,415 232,434 240,434" /><polygon points="236,463 233,476 236,489 239,476" /></g>
    <g fill="#c8f0c8"><polygon points="236,512 255,503 268,500 258,507" /><polygon points="268,500 290,489 316,486 300,494" /></g>
    <circle cx="268" cy="501" r="2" fill="#8fb89a" /><circle cx="301" cy="491" r="3" fill="#8fb89a" />
    <g fill="#d8262c"><polygon points="236,512 258,518 268,527 250,522" /><polygon points="264,526 282,534 302,542 280,538" /></g>
    <g fontFamily="Inter, sans-serif" fontSize="12.5">
      <text x="240" y="413" fill="#1848d8">ZM</text><text x="240" y="458" fill="#1848d8">ZC</text>
      <text x="265" y="493" fill="#2f8a3a">YC</text><text x="301" y="484" fill="#2f8a3a">YM</text>
      <text x="256" y="541" fill="#d03038">XC</text><text x="284" y="555" fill="#d03038">XM</text>
    </g>
    <g stroke="#b0b4b8" fill="#d0d2d4" fillOpacity=".55" strokeWidth=".8">
      <polygon points="52,634 65,627 78,633 66,641" /><polygon points="52,634 66,641 66,655 52,648" /><polygon points="66,641 78,633 78,648 66,655" />
    </g>
    <path d="M49 649V626" stroke="#0f48d8" strokeWidth="2.5" /><polygon points="49,619 45,628 53,628" fill="#0f48d8" />
    <path d="M49 649L75 640" stroke="#b4d8b4" strokeWidth="2" />
    <path d="M49 649L70 659" stroke="#d8262c" strokeWidth="2.5" />
    <circle cx="49" cy="649" r="3.5" fill="#d8d8d8" stroke="#888" strokeWidth=".5" />
    <g fontFamily="Inter, sans-serif" fontSize="10.5">
      <text x="46" y="618" fill="#1848d8">Z</text><text x="77" y="644" fill="#2f8a3a">Y</text><text x="71" y="665" fill="#d03038">X</text>
    </g>
  </SvgBox>
);

const MENUS = [
  ["文件", "(F)", 55], ["编辑", "(E)", 55], ["视图", "(V)", 55], ["插入", "(S)", 55], ["格式", "(R)", 55], ["工具", "(T)", 55],
  ["装配", "(A)", 55], ["信息", "(I)", 55], ["分析", "(L)", 67], ["首选项", "(P)", 67], ["浩强工具", "v2.58", 91], ["窗口", "(O)", 55],
];

const blanks = Array.from({ length: 16 }, (_, i) => i);
const DataCells = ({ sel }) => (
  <>
    <Cell $sel={sel}>D20...</Cell>
    <Cell $sel={sel}>0.0000</Cell>
    <Cell $sel={sel}>0.0000</Cell>
    <Cell $sel={sel}>250  mmpm</Cell>
  </>
);
const Empty = ({ n = 5 }) => Array.from({ length: n }, (_, i) => <Cell key={i} />);
const IconCell = ({ sel, children }) => <Cell $pad={5} $sel={sel}>{children}</Cell>;

export default function App() {
  return (
    <Screen>
      <Global />
      <TitleBar>
        <NxLogo s={18} id="t" />
        <TitleText>NX 10 - 加工 - [分割刀路-错误.prt （修改的） ]</TitleText>
        <Brand>SIEMENS</Brand>
        <WinBtns>
          <WinBtn><I w={10} h={10}><rect x="1" y="7" width="7" height="2" fill="#fff" /></I></WinBtn>
          <WinBtn><I w={10} h={10}><path d="M3 3V1H9V6H7M1 3H7V9H1Z" fill="none" stroke="#fff" /></I></WinBtn>
          <WinBtn $close><I w={12} h={12}><path d="M1 1L11 11M11 1L1 11" stroke="#fff" strokeWidth="2" /></I></WinBtn>
        </WinBtns>
      </TitleBar>

      <MenuBar>
        <Grip $w={5} />
        <Tool $w={22}><I w={17} h={20}><path d="M3 3V15" stroke="#555" strokeWidth="2" /><path d="M5 5h10M5 8h8M5 11h6" stroke="#3a60c0" /><polygon points="1,16 8,16 4,20" fill="#e0b020" /></I></Tool>
        {MENUS.map(([cn, k, w]) => <MenuItem key={cn} $w={w}>{cn}<Key>{k}</Key></MenuItem>)}
        <MenuItem $w={55}><Key>GC</Key>工具箱</MenuItem>
        <Tool $w={32}><RedCube /></Tool>
        <MenuItem $w={109} $ml={5}>星空外挂  <Key>V6.935F</Key></MenuItem>
        <MenuItem $w={50}>帮助<Key>(H)</Key></MenuItem>
        <DocBtns>
          <DocBtn><I w={9} h={9}><rect x="1" y="6" width="7" height="2" fill="#777" /></I></DocBtn>
          <DocBtn><I w={9} h={9}><path d="M3 2V0H9V5H7M0 2H6V8H0Z" fill="none" stroke="#777" /></I></DocBtn>
          <DocBtn><I w={9} h={9}><path d="M1 1L8 8M8 1L1 8" stroke="#666" strokeWidth="2" /></I></DocBtn>
        </DocBtns>
      </MenuBar>

      <Toolbar $h={34} $pad={3}>
        <Grip $w={7} />
        <Tool $w={25}><NxLogo s={24} id="s" /></Tool>
        <ToolLabel>启动</ToolLabel>
        <Tool $w={14}><Caret /></Tool>
        <Tool $w={25}><Folder /></Tool>
        <Tool $w={36}><Floppy /></Tool>
        <Sep />
        <Tool $w={32}><Undo /></Tool>
        <Tool $w={14}><Caret /></Tool>
        <Tool $w={30}><Undo c="#8f8f8f" flip /></Tool>
        <Sep $w={4} />
        <Tool $w={32}><Refresh /></Tool>
        <Tool $w={14}><Caret /></Tool>
        <Sep $w={4} />
        <Tool $w={30}><Magnifier /></Tool>
        <Tool $w={14}><Caret $down={10} /></Tool>
        <Sep $w={3} />
        <Grip $w={7} />
        <Tool $w={29}><Iso /></Tool>
        <Tool $w={14}><Caret /></Tool>
        <Tool $w={31}><Cube mode="solid" /></Tool>
        <Tool $w={31}><Cube mode="line" /></Tool>
        <Tool $w={31}><Cube mode="wire" /></Tool>
        <Tool $w={31}><Rainbow /></Tool>
        <Tool $w={31}><Cube mode="half" /></Tool>
        <Tool $w={31}><Sheet /></Tool>
        <Tool $w={31}><Planes /></Tool>
        <Tool $w={12}><Caret /></Tool>
        <Tool $w={30}><BlackBox /></Tool>
        <Tool $w={14}><Caret /></Tool>
        <Tool $w={10}><Caret $down={10} /></Tool>
        <Spacer />
        <RightGroup>
          <Grip $w={7} />
          <SelectBox $w={41}><SelectText>1</SelectText><SelectArrow><BigCaret /></SelectArrow></SelectBox>
          <Sep $w={13} />
          <Tool $w={32}><Ruler /></Tool>
          <Tool $w={32}><Protractor /></Tool>
          <Tool $w={10}><Caret $down={8} /></Tool>
        </RightGroup>
      </Toolbar>

      <Toolbar $h={28} $pad={5}>
        <SelectBox $w={113} $mr={7}><SelectText>无选择过滤器</SelectText><SelectArrow><BigCaret /></SelectArrow></SelectBox>
        <SelectBox $w={120}><SelectText>整个装配</SelectText><SelectArrow><BigCaret /></SelectArrow></SelectBox>
        <Tool $w={31}><GrayTool /></Tool>
        <Sep $w={2} $h={24} />
        <Tool $w={22}><Funnel /></Tool>
        <Tool $w={20}><RedBoxIco /></Tool>
        <Tool $w={14}><Caret /></Tool>
        <Tool $w={20}><TargetIco /></Tool>
        <Tool $w={24}><BinoIco /></Tool>
        <Sep $w={6} $h={24} />
        <Tool $w={22}><HexIco /></Tool>
        <Tool $w={24}><DashBox /></Tool>
        <Tool $w={14}><Caret /></Tool>
        <Sep $w={6} $h={24} />
        <Tool $w={22}><TinyBox /></Tool>
        <Tool $w={20}><Cube mode="half" s={18} /></Tool>
        <Spacer />
        <Tool $w={14}><Caret /></Tool>
      </Toolbar>

      <Main>
        <Viewport><Model /></Viewport>
        <SideColumn>
          <SideGroup $h={256}>
            <SideGrip />
            <SideBtn $h={26}><TreeProgram /></SideBtn>
            <SideBtn $h={36}><TreeTool /></SideBtn>
            <SideBtn $h={30} $on><TreeGeom /></SideBtn>
            <SideBtn $h={28}><TreeMethod /></SideBtn>
            <SideArrow />
            <SideRule />
            <SideGrip />
            <SideBtn $h={26}><GrayOp /></SideBtn>
            <SideBtn $h={34}><GrayOp v={1} /></SideBtn>
            <SideBtn $h={28}><GrayOp v={2} /></SideBtn>
            <SideArrow $h={12} />
          </SideGroup>
          <SideGroup $h={214}>
            <SideGrip />
            <SideBtn $h={26}><GrayOp /></SideBtn>
            <SideBtn $h={34}><GrayOp v={1} /></SideBtn>
            <SideBtn $h={32}><PathIco /></SideBtn>
            <SideBtn $h={30}><VerifyA /></SideBtn>
            <SideBtn $h={32}><VerifyB /></SideBtn>
            <SideRule />
            <SideBtn $h={30}><PostIco /></SideBtn>
            <SideArrow />
          </SideGroup>
        </SideColumn>

        <NavPanel>
          <NavHeader>
            <CheckBox />
            <NavTitle>工序导航器 - 几何</NavTitle>
          </NavHeader>
          <TableBox>
            <HeadRow>
              <HeadCell $pad={5}>名称</HeadCell>
              <HeadCell>刀轨</HeadCell><HeadCell>刀具</HeadCell><HeadCell>余量</HeadCell><HeadCell>底面余量</HeadCell><HeadCell>进给</HeadCell>
            </HeadRow>
            <Body>
              <Row>
                <NameCell $pad={3}><NodeText>GEOMETRY</NodeText></NameCell><Empty />
              </Row>
              <Row $alt>
                <NameCell $pad={11}><Elbow $w={11} /><UnusedIco /><NodeCn>未用项</NodeCn></NameCell><Empty />
              </Row>
              <Row>
                <NameCell $pad={6}><Toggle /><Dash $w={6} /><McsIco /><NodeText>MCS_MILL</NodeText></NameCell><Empty />
              </Row>
              <Row $alt>
                <NameCell $pad={25}><Toggle /><Dash $w={6} /><WpIco /><NodeText $ml={2}>WORKPIECE</NodeText></NameCell><Empty />
              </Row>
              <Row>
                <NameCell $pad={49}><Elbow $w={13} /><Bulb /><BulbGap /><OpIco /><NodeText $ml={2}>CAVITY_MILL</NodeText></NameCell>
                <IconCell><Check /></IconCell><DataCells />
              </Row>
              <Row $alt $red>
                <NameCell $pad={49}><Elbow $w={13} /><Bulb /><BulbGap /><OpIco /><NodeText $ml={2}>ZLEVEL_PROFILE</NodeText></NameCell>
                <IconCell><Wrench /></IconCell><DataCells />
              </Row>
              <Row>
                <NameCell $pad={49}><Elbow $w={13} /><Bulb /><BulbGap /><OpIco /><SelText>ZLEVEL_PROFILE_DIV_1</SelText></NameCell>
                <IconCell sel><Wrench /></IconCell><DataCells sel />
              </Row>
              {blanks.map(i => (
                <Row key={i} $alt={i % 2 === 0}><NameCell /><Empty /></Row>
              ))}
            </Body>
            <ScrollBar>
              <ScrollBtn $w={16} $left />
              <ScrollBtn $w={463} />
              <ScrollGap />
              <ScrollBtn $w={16} $right />
            </ScrollBar>
          </TableBox>
          <Sash />
          <Fold>相依性<FoldChevron><FoldV /></FoldChevron></Fold>
          <Fold>细节</Fold>
        </NavPanel>

        <RightRail>
          <GearSlot><Gear /></GearSlot>
          <RailTab $h={40}><RailA /></RailTab>
          <RailTab $h={40}><RailB /></RailTab>
          <RailTab $h={39}><RailC /></RailTab>
          <RailTab $h={43} $on><RailD /></RailTab>
          <RailTab $h={39}><RailE /></RailTab>
          <RailTab $h={39} $mt={4}><RailClock /></RailTab>
          <RailTab $h={39}><RailSpectrum /></RailTab>
          <RailTab $h={39}><RailMill /></RailTab>
          <RailTab $h={39}><RailWrench /></RailTab>
          <RailTab $h={49}><RailNode /></RailTab>
        </RightRail>
      </Main>

      <StatusBar><StatusCell>全部<StatusNum>1</StatusNum></StatusCell></StatusBar>

      <Taskbar>
        <StartBtn><Flag /><FocusText>开始</FocusText></StartBtn>
        <QuickSlot><Palette /></QuickSlot>
        <TaskBtn $w={160}><IeIco />一个吊炸天的<TaskLatin>CAM...</TaskLatin></TaskBtn>
        <TaskBtn $w={160} $on><NxLogo s={30} id="b" /><TaskLatin $b>NX 10 - </TaskLatin>加工<TaskLatin $b> ...</TaskLatin></TaskBtn>
        <Lang>CH</Lang>
        <TraySep $mr={7} />
        <HelpSlot><HelpIco /></HelpSlot>
        <TraySep $mr={2} />
        <Chevrons>??<Caret /></Chevrons>
        <Tray>
          <PlusIco /><Bars /><Speaker /><Hand />
          <Clock><span>16:00</span><span>2016/9/4</span></Clock>
          <DeskIco />
        </Tray>
      </Taskbar>

      <Bubble>重新后处理</Bubble>
      <Stroke width="100" height="125" viewBox="0 0 100 125"><path d="M88 8 L10 115" stroke="#e8202c" strokeWidth="4" strokeLinecap="round" /></Stroke>
      <Note>这样，不对</Note>

      <Meter>
        <MeterLine><Alert $c="#e04030">↑</Alert> 0.03K/s</MeterLine>
        <MeterLine><Alert $c="#30a040">↓</Alert> 0.03K/s</MeterLine>
      </Meter>
      <Dial>49%</Dial>
      <MarkLogo width="90" height="100" viewBox="0 0 90 100">
        <polygon points="44,2 87,26 87,74 44,98 2,74 2,26" fill="#5f92cc" stroke="#e8f2fa" strokeWidth="2" />
        <path d="M44 2 L87 26 V74 L44 98 Q70 76 62 50 Q56 22 44 2Z" fill="#6cbde6" />
        <polygon points="44,24 68,38 68,64 44,78 22,64 22,38" fill="none" stroke="#e8f2fa" strokeWidth="6" />
        <polygon points="44,30 63,40 44,50 26,40" fill="#5f92cc" stroke="#dfeaf6" />
        <polygon points="26,40 44,50 44,73 26,62" fill="#5f92cc" stroke="#dfeaf6" />
        <polygon points="63,40 44,50 44,73 63,62" fill="#6cbde6" stroke="#dfeaf6" />
      </MarkLogo>
      <MarkTitle>3D世界网</MarkTitle>
      <MarkSub>WWW.3DSJW.COM</MarkSub>
    </Screen>
  );
}
